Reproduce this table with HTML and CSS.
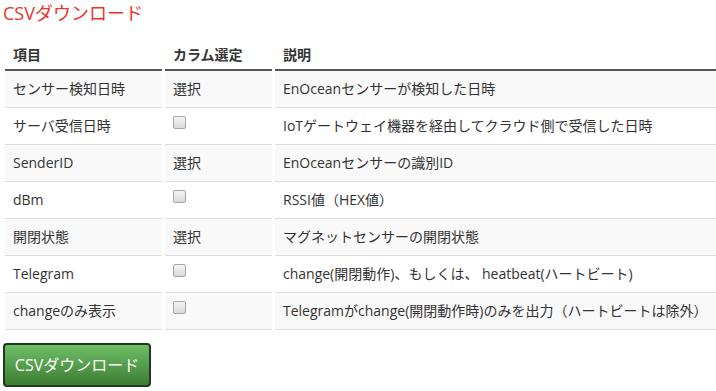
FILE: index.html
```html
<!DOCTYPE html>
<html lang="ja">
<head>
<meta charset="utf-8">
<link rel="stylesheet" href="styles.css">
</head>
<body>
<div class="page">
  <h1 class="title">CSVダウンロード</h1>
  <table class="cols">
    <colgroup>
      <col class="c1"><col class="c2"><col class="c3">
    </colgroup>
    <thead>
      <tr><th>項目</th><th>カラム選定</th><th>説明</th></tr>
    </thead>
    <tbody>
      <tr><td>センサー検知日時</td><td>選択</td><td>EnOceanセンサーが検知した日時</td></tr>
      <tr><td>サーバ受信日時</td><td><input type="checkbox" class="chk"></td><td>IoTゲートウェイ機器を経由してクラウド側で受信した日時</td></tr>
      <tr><td>SenderID</td><td>選択</td><td>EnOceanセンサーの識別ID</td></tr>
      <tr><td>dBm</td><td><input type="checkbox" class="chk"></td><td>RSSI値（HEX値）</td></tr>
      <tr><td>開閉状態</td><td>選択</td><td>マグネットセンサーの開閉状態</td></tr>
      <tr><td>Telegram</td><td><input type="checkbox" class="chk"></td><td>change(開閉動作)、もしくは、 heatbeat(ハートビート)</td></tr>
      <tr><td>changeのみ表示</td><td><input type="checkbox" class="chk"></td><td>Telegramがchange(開閉動作時)のみを出力（ハートビートは除外）</td></tr>
    </tbody>
  </table>
  <button class="btn" type="button">CSVダウンロード</button>
</div>
</body>
</html>
```

FILE: styles.css
```css
html, body {
  margin: 0;
  padding: 0;
  background: #fff;
  overflow: hidden;
}
body {
  font-family: "Open Sans", "Noto Sans CJK JP", sans-serif;
  font-size: 14px;
  line-height: 20px;
  color: #333;
}
.page {
  padding: 0 0 0 2px;
  display: flex;
  flex-direction: column;
  align-items: flex-start;
}
.title {
  margin: 0 0 9px 1px;
  font-size: 18px;
  line-height: 26px;
  font-weight: normal;
  color: #e8352b;
}
.cols {
  border-collapse: separate;
  border-spacing: 3px 0;
  width: 717px;
  table-layout: fixed;
}
.c1 { width: 157px; }
.c2 { width: 107px; }
.c3 { width: 441px; }
.cols th {
  text-align: left;
  font-weight: bold;
  padding: 10px 8px 4px 8px;
  border-bottom: 2px solid #555;
  vertical-align: bottom;
}
.cols td {
  padding: 8px;
  border-top: 1px solid #ddd;
  vertical-align: top;
  white-space: nowrap;
}
.cols tbody tr:first-child td { border-top: 0; height: 19px; }
.cols tbody tr:nth-child(odd) td { background: #f9f9f9; }
.cols tbody tr:last-child td { border-bottom: 1px solid #ddd; }
.chk {
  appearance: none;
  -webkit-appearance: none;
  width: 13px;
  height: 13px;
  margin: 0;
  display: block;
  border: 1px solid #a6a6a6;
  border-radius: 2px;
  background: linear-gradient(#f4f4f4, #d9d9d9);
}
.btn {
  margin: 13px 0 0 1px;
  padding: 10px 6px;
  font-family: "Open Sans", "Noto Sans CJK JP", sans-serif;
  font-size: 16px;
  line-height: 20px;
  color: #fff;
  border: 2px solid #1f3b1c;
  border-radius: 4px;
  background: linear-gradient(#6fbf67, #3c7c33);
  width: 148px;
}
```
